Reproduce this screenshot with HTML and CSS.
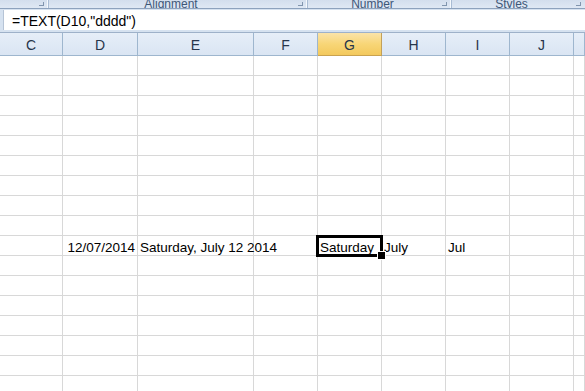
FILE: index.html
```html
<!DOCTYPE html>
<html lang="en">
<head>
    <meta charset="UTF-8">
    <title>TEXT function - dddd</title>
    <link rel="stylesheet" href="styles.css">
</head>
<body>
<div class="ribbon">
    <div class="group g1"><span class="launch"></span></div>
    <div class="group g2"><span class="label">Alignment</span><span class="launch"></span></div>
    <div class="group g3"><span class="label">Number</span><span class="launch"></span></div>
    <div class="group g4"><span class="label">Styles</span><span class="launch"></span></div>
</div>
<div class="fbar">
    <div class="finput">=TEXT(D10,"dddd")</div>
</div>
<div class="sheet" id="sheet">
    <div class="hd">C</div>
    <div class="hd">D</div>
    <div class="hd">E</div>
    <div class="hd">F</div>
    <div class="hd sel">G</div>
    <div class="hd">H</div>
    <div class="hd">I</div>
    <div class="hd">J</div>
    <div class="hd"></div>
</div>
<script>
    // 17 rows, data sits in row 10
    var oSheet = document.getElementById("sheet");
    var data = {
        10: ["", "12/07/2014", "Saturday, July 12 2014", "", "Saturday", "July", "Jul", "", ""]
    };
    for (var r = 1; r <= 17; r++) {
        for (var c = 0; c < 9; c++) {
            var cell = document.createElement("div");
            cell.className = "cell";
            var txt = data[r] ? data[r][c] : "";
            if (txt) {
                var s = document.createElement("span");
                s.textContent = txt;
                cell.appendChild(s);
                if (c == 1) cell.className += " num";
            }
            if (r == 10 && c == 4) cell.className += " active";
            oSheet.appendChild(cell);
        }
    }
</script>
</body>
</html>
```

FILE: styles.css
```css
*{margin: 0;padding: 0;box-sizing: border-box;}
body{
    width: 585px;
    height: 391px;
    overflow: hidden;
    background: #fff;
    font-family: "Liberation Sans", Arial, sans-serif;
    font-size: 13.5px;
    color: #000;
}
/* ribbon bottom edge */
.ribbon{
    display: grid;
    grid-template-columns: 49px 259px 144px 1fr;
    height: 9px;
    background: linear-gradient(to bottom, #d3deed 0%, #dfe8f4 100%);
    border-bottom: 1px solid #8da2bd;
    overflow: hidden;
}
.group{
    position: relative;
    display: flex;
    align-items: flex-end;
    justify-content: center;
    height: 8px;
    overflow: hidden;
    border-right: 1px solid #a9bcd4;
    box-shadow: inset -1px 0 0 #f4f8fc;
}
.g4{border-right: none;box-shadow: none;}
.label{
    font-size: 12px;
    line-height: 14px;
    margin-bottom: -3px;
    margin-right: 14px;
    color: #3e5778;
}
.launch{
    position: absolute;
    right: 4px;
    bottom: 2px;
    width: 5px;
    height: 4px;
    border-right: 1px solid #8195ae;
    border-bottom: 1px solid #8195ae;
}
/* formula bar */
.fbar{
    background: #d6e2f0;
    padding: 1px 0 2px 3px;
    border-bottom: 1px solid #9eb1c9;
}
.finput{
    height: 20px;
    background: #fff;
    border-left: 1px solid #b6c4d6;
    padding: 2px 0 0 8px;
    line-height: 18px;
    font-size: 14px;
    white-space: pre;
}
/* grid */
.sheet{
    display: grid;
    grid-template-columns: 63px 75px 116px 64px 64px 64px 64px 64px 1fr;
    grid-auto-rows: 20px;
    grid-template-rows: 23px;
}
.hd{
    background: linear-gradient(to bottom, #e6eef8 0%, #dae5f3 100%);
    border-right: 1px solid #9eb6ce;
    border-bottom: 1px solid #9eb6ce;
    text-align: center;
    padding-top: 1px;
    line-height: 22px;
    font-size: 14px;
    color: #27354a;
}
.hd.sel{
    background: linear-gradient(to bottom, #fbe3a8 0%, #f8d677 50%, #f3c95d 100%);
    border-right-color: #c2a05a;
    border-bottom-color: #c9a24f;
}
.cell{
    position: relative;
    border-right: 1px solid #d8d8d8;
    border-bottom: 1px solid #d8d8d8;
    line-height: 17px;
    padding: 3px 0 0 2px;
    white-space: nowrap;
}
.cell span{
    position: relative;
    z-index: 1;
}
.cell.num{
    text-align: right;
    padding-right: 2px;
}
.active::after{
    content: "";
    position: absolute;
    left: -2px;
    top: -1px;
    right: -2px;
    bottom: -2px;
    border: 3px solid #000;
    z-index: 2;
}
.active::before{
    content: "";
    position: absolute;
    right: -5px;
    bottom: -5px;
    width: 7px;
    height: 7px;
    background: #000;
    border: 1px solid #fff;
    z-index: 3;
}
```
